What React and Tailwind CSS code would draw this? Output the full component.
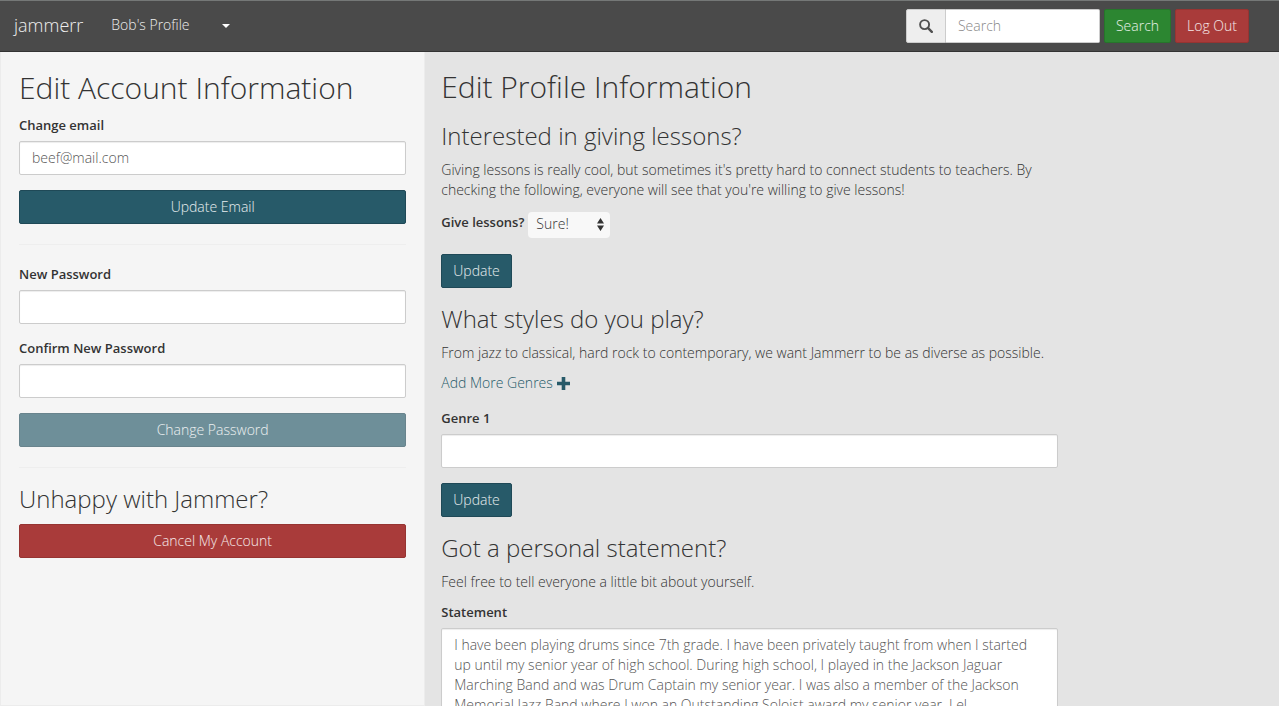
import React from 'react';

const statement =
  'I have been playing drums since 7th grade. I have been privately taught from when I started up until my senior year of high school. During high school, I played in the Jackson Jaguar Marching Band and was Drum Captain my senior year. I was also a member of the Jackson Memorial Jazz Band where I won an Outstanding Soloist award my senior year. Lel.';

const fieldClass =
  'block w-full h-[34px] rounded-xs border border-[#cccccc] bg-white px-3 pb-0.5 text-sm font-light text-[#555555] shadow-[inset_0_1px_1px_rgba(0,0,0,0.075)] outline-none';
const labelClass = 'text-[13px] leading-5 font-semibold';
const primaryClass = 'border-[#1f4957] bg-[#275a69]';
const dangerClass = 'border-[#963432] bg-[#a93b3a]';
const successClass = 'border-[#26752b] bg-[#2c8631]';

function Button({ tone, className = '', ...props }) {
  return (
    <button
      type="button"
      className={`h-[34px] shrink-0 rounded-xs border px-[11px] text-sm font-light text-white/90 ${tone} ${className}`}
      {...props}
    />
  );
}

function Field({ id, label, className = '', ...props }) {
  return (
    <div className={className}>
      <label htmlFor={id} className={`mb-1.5 block ${labelClass}`}>
        {label}
      </label>
      <input id={id} className={fieldClass} {...props} />
    </div>
  );
}

function SearchIcon() {
  return (
    <svg viewBox="0 0 14 14" className="size-3.5" fill="none" stroke="#505050" role="img" aria-label="Search">
      <circle cx="5.6" cy="5.6" r="4.5" strokeWidth="1.9" />
      <path d="M8.9 8.9 12.8 12.8" strokeWidth="2.4" strokeLinecap="round" />
    </svg>
  );
}

function Navbar() {
  return (
    <nav className="flex h-[52px] shrink-0 items-center border-t border-b border-t-[#757877] border-b-[#333333] bg-[#4a4a4a] pr-[30px] pl-3.5 text-[#eeeeee]">
      <a href="#home" className="pb-0.5 text-lg leading-5">jammerr</a>
      <a href="#profile" className="ml-7 pb-0.5 text-sm leading-5">Bob's Profile</a>
      <button type="button" aria-label="Open menu" className="ml-7 flex h-8 w-4 items-center justify-center">
        <svg viewBox="0 0 8 4" className="h-1 w-2" fill="#ffffff" aria-hidden="true">
          <path d="M0 0h8L4 4z" />
        </svg>
      </button>
      <form className="ml-auto flex items-center gap-1" onSubmit={(e) => e.preventDefault()}>
        <div className="flex h-[34px] w-[194px]">
          <label
            htmlFor="search"
            className="flex w-10 shrink-0 items-center justify-center rounded-l-xs border border-[#cccccc] bg-[#eeeeee]"
          >
            <SearchIcon />
          </label>
          <input
            id="search"
            placeholder="Search"
            className="h-full w-full min-w-0 rounded-r-xs border border-l-0 border-[#cccccc] bg-white px-3 pb-0.5 text-sm font-light text-[#555555] outline-none placeholder:text-[#888888]"
          />
        </div>
        <Button tone={successClass}>Search</Button>
        <Button tone={dangerClass}>Log Out</Button>
      </form>
    </nav>
  );
}

function AccountPanel() {
  return (
    <section className="w-[33.25%] shrink-0 border border-t-0 border-[#ececec] bg-[#f5f5f5] pt-[19px] pr-[18px] pl-[18px]">
      <h1 className="mb-2.5 text-3xl leading-[34px]">Edit Account Information</h1>
      <Field id="email" label="Change email" type="email" defaultValue="beef@mail.com" />
      <Button tone={primaryClass} className="mt-[15px] w-full">Update Email</Button>
      <hr className="mt-5 mb-[19px] border-[#eeeeee]" />
      <Field id="password" label="New Password" type="password" />
      <Field id="confirm" label="Confirm New Password" type="password" className="mt-3.5" />
      <Button tone={primaryClass} className="mt-[15px] w-full opacity-65" disabled>
        Change Password
      </Button>
      <hr className="mt-5 mb-[17px] border-[#eeeeee]" />
      <h2 className="mb-[11px] text-2xl leading-7">Unhappy with Jammer?</h2>
      <Button tone={dangerClass} className="w-full">Cancel My Account</Button>
    </section>
  );
}

function ProfilePanel() {
  return (
    <section className="min-w-0 grow overflow-y-auto pt-[18px] pr-4 pb-8 pl-4 [scrollbar-width:none]">
      <div className="max-w-[617px]">
        <h1 className="text-3xl leading-[34px]">Edit Profile Information</h1>

        <h2 className="mt-[18px] text-2xl leading-7">Interested in giving lessons?</h2>
        <p className="mt-2.5 text-sm leading-5">
          Giving lessons is really cool, but sometimes it's pretty hard to connect students to
          teachers. By checking the following, everyone will see that you're willing to give lessons!
        </p>
        <div className="mt-3 flex items-start gap-1">
          <label htmlFor="lessons" className={labelClass}>Give lessons?</label>
          <div className="relative">
            <select
              id="lessons"
              className="block h-[26px] w-[82px] appearance-none rounded-sm bg-[#f8f8f8] pb-0.5 pl-2 text-sm font-light outline-none"
            >
              <option>Sure!</option>
              <option>Nope</option>
            </select>
            <svg
              viewBox="0 0 7 13"
              className="pointer-events-none absolute top-1.5 right-1.5 h-[13px] w-[7px]"
              fill="#333333"
              aria-hidden="true"
            >
              <path d="M0 5.4 3.5 0 7 5.4zM0 7.6h7L3.5 13z" />
            </svg>
          </div>
        </div>
        <Button tone={primaryClass} className="mt-4">Update</Button>

        <h2 className="mt-[17px] text-2xl leading-7">What styles do you play?</h2>
        <p className="mt-2.5 text-sm leading-5">
          From jazz to classical, hard rock to contemporary, we want Jammerr to be as diverse as possible.
        </p>
        <a href="#genres" className="mt-2.5 flex items-center gap-1 text-sm leading-5 text-[#275a69]">
          Add More Genres
          <svg viewBox="0 0 13 13" className="size-[13px]" fill="currentColor" aria-hidden="true">
            <path d="M4.7 0h3.6v4.7H13v3.6H8.3V13H4.7V8.3H0V4.7h4.7z" />
          </svg>
        </a>
        <Field id="genre" label="Genre 1" className="mt-[15px]" />
        <Button tone={primaryClass} className="mt-[15px]">Update</Button>

        <h2 className="mt-[17px] text-2xl leading-7">Got a personal statement?</h2>
        <p className="mt-2.5 text-sm leading-5">Feel free to tell everyone a little bit about yourself.</p>
        <label htmlFor="statement" className={`mt-2.5 mb-1.5 block ${labelClass}`}>
          Statement
        </label>
        <textarea
          id="statement"
          defaultValue={statement}
          className="block h-40 w-full resize-none rounded-xs border border-[#cccccc] bg-white px-3 py-1.5 text-sm leading-5 font-light text-[#555555] shadow-[inset_0_1px_1px_rgba(0,0,0,0.075)] outline-none"
        />
      </div>
    </section>
  );
}

export default function App() {
  return (
    <div className="flex h-screen flex-col bg-[#e4e4e4] font-['Open_Sans','Noto_Sans',sans-serif] font-light text-[#333333]">
      <Navbar />
      <main className="flex min-h-0 grow">
        <AccountPanel />
        <ProfilePanel />
      </main>
    </div>
  );
}
